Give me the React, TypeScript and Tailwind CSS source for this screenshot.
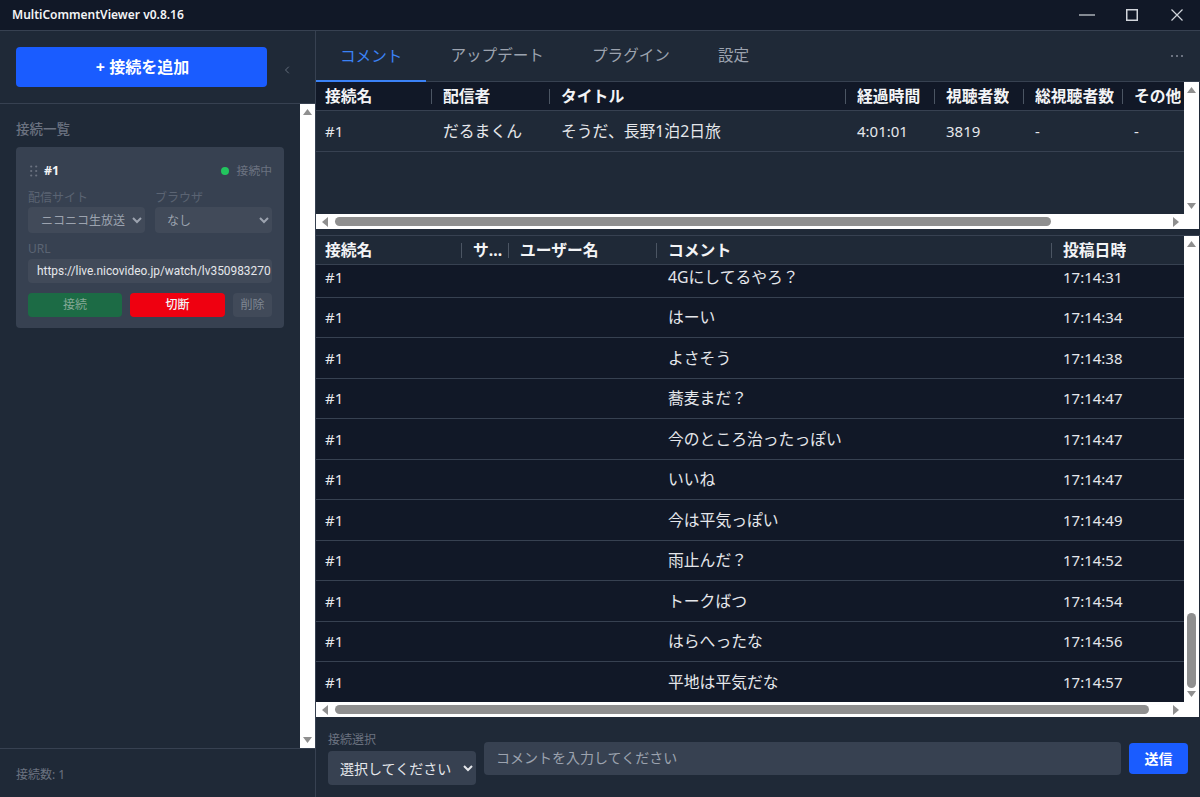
import React from "react";
import { ChevronLeft } from "lucide-react";

const Up = () => (<svg width="9" height="6" viewBox="0 0 9 6"><polygon points="4.5,0 9,6 0,6" fill="#8f8f8f" /></svg>);
const Down = () => (<svg width="9" height="6" viewBox="0 0 9 6"><polygon points="0,0 9,0 4.5,6" fill="#8f8f8f" /></svg>);
const Left = () => (<svg width="6" height="10" viewBox="0 0 6 10"><polygon points="6,0 6,10 0,5" fill="#8f8f8f" /></svg>);
const Right = () => (<svg width="6" height="10" viewBox="0 0 6 10"><polygon points="0,0 6,5 0,10" fill="#8f8f8f" /></svg>);

function VBar({ thumb }: { thumb?: boolean }) {
  return (
    <div className="flex w-[15px] shrink-0 flex-col items-center bg-white py-[5px]">
      <Up />
      <div className="flex min-h-0 flex-1 flex-col justify-end">
        {thumb && <div className="mb-[3px] h-[75px] w-[9px] rounded-full bg-[#8f8f8f]" />}
      </div>
      <Down />
    </div>
  );
}

function HBar({ thumbWidth }: { thumbWidth: string }) {
  return (
    <div className="flex h-[15px] shrink-0 items-center bg-white pl-[6px] pr-[20px]">
      <Left />
      <div className={"ml-[7px] h-[9px] rounded-full bg-[#8f8f8f] " + thumbWidth} />
      <div className="flex-1" />
      <Right />
    </div>
  );
}

function Th({ w, children, first }: { w: string; children: React.ReactNode; first?: boolean }) {
  return (
    <div className={"flex h-full shrink-0 items-center " + w}>
      {!first && <div className="mr-[11px] h-[15px] w-px bg-[#4b5563]" />}
      <span className={"truncate pt-[2px] text-[15.8px] font-bold text-[#f3f4f6] " + (first ? "pl-[9px]" : "")}>{children}</span>
    </div>
  );
}

function Td({ w, children, first, cjk }: { w: string; children?: React.ReactNode; first?: boolean; cjk?: boolean }) {
  return (
    <div className={"shrink-0 truncate text-[#e5e7eb] " + w + (first ? " pl-[9px]" : " pl-[12px]") + (cjk ? " pt-[2px] text-[15.8px]" : " text-[15px]")}>{children}</div>
  );
}

const comments: [string, string][] = [
  ["4Gにしてるやろ？", "17:14:31"],
  ["はーい", "17:14:34"],
  ["よさそう", "17:14:38"],
  ["蕎麦まだ？", "17:14:47"],
  ["今のところ治ったっぽい", "17:14:47"],
  ["いいね", "17:14:47"],
  ["今は平気っぽい", "17:14:49"],
  ["雨止んだ？", "17:14:52"],
  ["トークばつ", "17:14:54"],
  ["はらへったな", "17:14:56"],
  ["平地は平気だな", "17:14:57"],
];

function Sidebar() {
  return (
    <aside className="flex h-full w-[316px] shrink-0 flex-col border-r border-[#374151] bg-[#1f2937]">
      <div className="flex h-[73px] shrink-0 items-center border-b border-[#374151] pl-4">
        <button className="h-10 w-[251px] rounded bg-[#1a5cff] pl-[2px] text-[16px] font-bold text-white">+ 接続を追加</button>
        <ChevronLeft size={12} strokeWidth={1.5} className="ml-[14px] mt-[5px] text-[#7b8493]" />
      </div>
      <div className="flex min-h-0 flex-1">
        <div className="min-w-0 flex-1 px-4 pt-4">
          <div className="mb-[8px] h-[19px] text-[13.5px] font-medium leading-[18px] text-[#6b7280]">接続一覧</div>
          <div className="h-[181px] rounded bg-[#374151] px-3 pt-3">
            <div className="flex h-[24px] items-center">
              <svg width="8" height="12" viewBox="0 0 8 12" className="ml-[2px] mr-[6px]" fill="#6b7280">
                <circle cx="1.2" cy="1.5" r="1.1" /><circle cx="6.2" cy="1.5" r="1.1" />
                <circle cx="1.2" cy="6" r="1.1" /><circle cx="6.2" cy="6" r="1.1" />
                <circle cx="1.2" cy="10.5" r="1.1" /><circle cx="6.2" cy="10.5" r="1.1" />
              </svg>
              <span className="text-[12.5px] font-bold text-[#f3f4f6]">#1</span>
              <span className="ml-auto mr-2 h-2 w-2 rounded-full bg-[#22c55e]" />
              <span className="text-[11.8px] text-[#6b7280]">接続中</span>
            </div>
            <div className="mt-[6px] flex gap-[10px]">
              <label className="flex w-[117px] flex-col">
                <span className="h-[18px] text-[12px] leading-[17px] text-[#5b6473]">配信サイト</span>
                <select defaultValue="n" className="h-[26px] w-full rounded bg-[#414a59] pl-[9px] text-[12px] text-[#9ca3af]">
                  <option value="n">ニコニコ生放送</option>
                </select>
              </label>
              <label className="flex w-[117px] flex-col">
                <span className="h-[18px] text-[12px] leading-[17px] text-[#5b6473]">ブラウザ</span>
                <select defaultValue="n" className="h-[26px] w-full rounded bg-[#414a59] pl-[8px] text-[12px] text-[#9ca3af]">
                  <option value="n">なし</option>
                </select>
              </label>
            </div>
            <div className="mt-[7px] h-[19px] text-[12px] leading-[18px] text-[#5b6473]">URL</div>
            <input
              readOnly
              value="https://live.nicovideo.jp/watch/lv350983270"
              className="block h-[24px] w-full rounded bg-[#414a59] pl-[9px] pr-0 font-['Roboto',sans-serif] text-[11.9px] text-[#e5e7eb] outline-none"
            />
            <div className="mt-[10px] flex">
              <button className="h-[24px] w-[94px] rounded bg-[#1c6b45] text-[12px] text-[#84a896]">接続</button>
              <button className="ml-2 h-[24px] w-[95px] rounded bg-[#ef0010] text-[12px] font-medium text-[#f3f4f6]">切断</button>
              <button className="ml-2 h-[24px] w-[39px] rounded bg-[#414a59] text-[12px] text-[#7f8793]">削除</button>
            </div>
          </div>
        </div>
        <VBar />
      </div>
      <div className="flex h-[49px] shrink-0 items-center border-t border-[#374151] pl-4 pt-[3px] text-[12px] text-[#6b7280]">接続数: 1</div>
    </aside>
  );
}

function Tabs() {
  const tabs = ["コメント", "アップデート", "プラグイン", "設定"];
  return (
    <div className="flex h-[51px] shrink-0 border-b border-[#374151] bg-[#1f2937]">
      {tabs.map((t, i) => (
        <div
          key={t}
          className={
            "flex items-center border-b-2 px-6 pt-[2px] text-[15.6px] " +
            (i === 0 ? "-mb-px border-[#3b82f6] text-[#3b82f6]" : "border-transparent text-[#9ca3af]")
          }
        >
          {t}
        </div>
      ))}
      <div className="ml-auto flex items-center gap-[3px] pr-[17px]">
        <span className="h-[2px] w-[2px] bg-[#6b7280]" />
        <span className="h-[2px] w-[2px] bg-[#6b7280]" />
        <span className="h-[2px] w-[2px] bg-[#6b7280]" />
      </div>
    </div>
  );
}

function StreamTable() {
  return (
    <section className="flex h-[147px] shrink-0 flex-col bg-[#1f2937] pr-px">
      <div className="flex min-h-0 flex-1">
        <div className="min-w-0 flex-1">
          <div className="flex h-[29px] items-center overflow-hidden border-b border-[#374151] bg-[#111827]">
            <Th first w="w-[115px]">接続名</Th>
            <Th w="w-[118px]">配信者</Th>
            <Th w="w-[296px]">タイトル</Th>
            <Th w="w-[89px]">経過時間</Th>
            <Th w="w-[89px]">視聴者数</Th>
            <Th w="w-[99px]">総視聴者数</Th>
            <Th w="w-[62px]">その他</Th>
          </div>
          <div className="flex h-[41px] items-center border-b border-[#374151]">
            <Td first w="w-[115px]">#1</Td>
            <Td cjk w="w-[118px]">だるまくん</Td>
            <Td cjk w="w-[296px]">そうだ、長野1泊2日旅</Td>
            <Td w="w-[89px]">4:01:01</Td>
            <Td w="w-[89px]">3819</Td>
            <Td w="w-[99px]">-</Td>
            <Td w="w-[62px]">-</Td>
          </div>
        </div>
        <VBar />
      </div>
      <HBar thumbWidth="w-[716px]" />
    </section>
  );
}

function CommentTable() {
  return (
    <section className="mt-[6px] flex min-h-0 flex-1 flex-col border-t border-[#374151] pr-px">
      <div className="flex min-h-0 flex-1">
        <div className="flex min-w-0 flex-1 flex-col">
          <div className="flex h-[29px] shrink-0 items-center border-b border-[#374151] bg-[#1f2937]">
            <Th first w="w-[145px]">接続名</Th>
            <Th w="w-[47px]">サ...</Th>
            <Th w="w-[148px]">ユーザー名</Th>
            <Th w="w-[395px]">コメント</Th>
            <Th w="w-[133px]">投稿日時</Th>
          </div>
          <div className="min-h-0 flex-1 overflow-hidden bg-[#111827]">
            <div className="-mt-[8px]">
              {comments.map(([c, t]) => (
                <div key={c} className="flex h-[40.5px] items-center border-b border-[#374151]">
                  <Td first w="w-[145px]">#1</Td>
                  <Td w="w-[47px]" />
                  <Td w="w-[148px]" />
                  <Td cjk w="w-[395px]">{c}</Td>
                  <Td w="w-[133px]">{t}</Td>
                </div>
              ))}
            </div>
          </div>
        </div>
        <VBar thumb />
      </div>
      <HBar thumbWidth="w-[814px]" />
    </section>
  );
}

function Composer() {
  return (
    <div className="flex h-[80px] shrink-0 gap-2 bg-[#1f2937] px-3">
      <label className="flex w-[148px] shrink-0 flex-col pt-[15px]">
        <span className="h-[19px] text-[12px] leading-[16px] text-[#6b7280]">接続選択</span>
        <select defaultValue="s" className="h-[34px] w-full rounded bg-[#374151] pl-[8px] text-[14px] text-[#e5e7eb]">
          <option value="s">選択してください</option>
        </select>
      </label>
      <input
        placeholder="コメントを入力してください"
        className="mt-[25px] h-[33px] min-w-0 flex-1 rounded bg-[#374151] px-3 pb-[2px] text-[14px] text-[#e5e7eb] outline-none placeholder:text-[#9ca3af]"
      />
      <button className="mt-[26px] h-[31px] w-[59px] shrink-0 rounded bg-[#1a5cff] text-[14px] font-bold text-white">送信</button>
    </div>
  );
}

export default function App() {
  return (
    <div className="flex h-[797px] w-[1200px] flex-col overflow-hidden bg-[#1f2937] font-['Noto_Sans','Noto_Sans_CJK_JP',sans-serif]">
      <header className="flex h-[31px] shrink-0 items-center border-b border-[#374151] bg-[#111827] pl-3">
        <span className="text-[12px] font-semibold text-[#f3f4f6]">MultiCommentViewer v0.8.16</span>
        <div className="ml-auto flex items-center pr-[17px] text-[#d1d5db]">
          <svg width="16" height="12" viewBox="0 0 16 12" fill="none" stroke="currentColor" strokeWidth="1.2"><path d="M0 6h16" /></svg>
          <svg width="12" height="12" viewBox="0 0 12 12" fill="none" stroke="currentColor" strokeWidth="1.5" className="ml-[31px]"><rect x="0.75" y="0.75" width="10.5" height="10.5" /></svg>
          <svg width="12" height="12" viewBox="0 0 12 12" fill="none" stroke="currentColor" strokeWidth="1.2" className="ml-[33px]"><path d="M0.5 0.5l11 11M11.5 0.5l-11 11" /></svg>
        </div>
      </header>
      <div className="flex min-h-0 flex-1">
        <Sidebar />
        <main className="flex min-w-0 flex-1 flex-col">
          <Tabs />
          <StreamTable />
          <CommentTable />
          <Composer />
        </main>
      </div>
    </div>
  );
}
